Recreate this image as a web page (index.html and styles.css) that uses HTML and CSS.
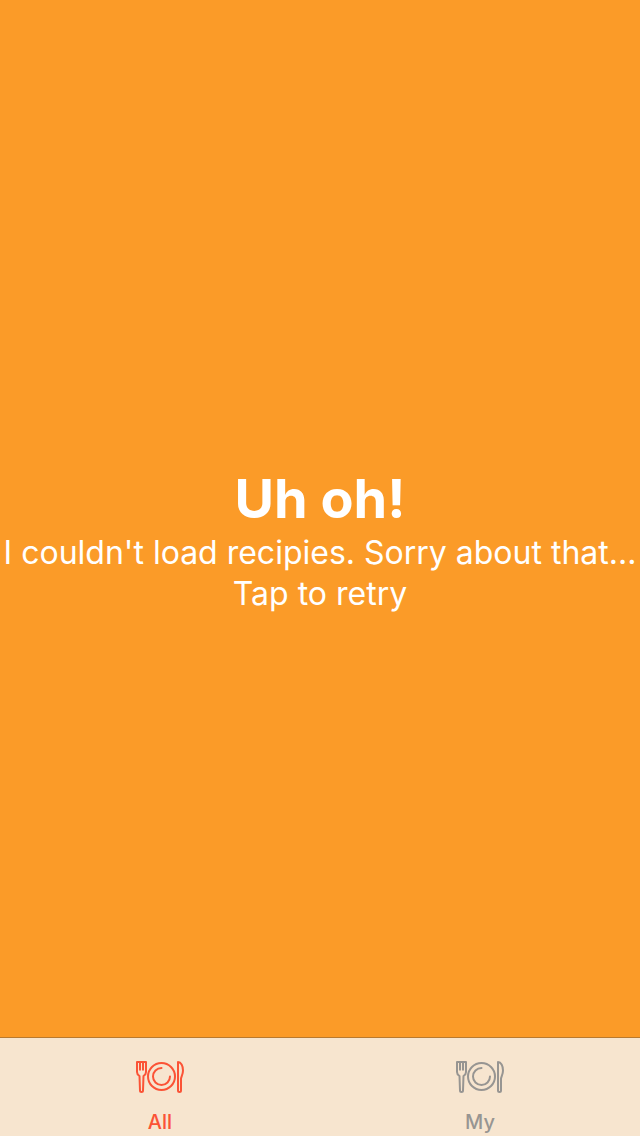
FILE: index.html
```html
<!DOCTYPE html>
<html lang="en">
<head>
<meta charset="utf-8">
<meta name="viewport" content="width=device-width, initial-scale=1">
<title>Recipes</title>
<link rel="stylesheet" href="styles.css">
</head>
<body>
<svg class="sprite" aria-hidden="true">
  <symbol id="dining" viewBox="0 0 48 32">
    <g fill="none" stroke="currentColor" stroke-width="2" stroke-linejoin="round" stroke-linecap="round">
      <path d="M1 1h9v10c0 2-.8 3-2.500 4L7 29.500c0 2-3 2-3 0L3.500 15C1.800 14 1 13 1 11Z"/>
      <path stroke-linecap="butt" d="M4 1v8.500M7 1v8.500"/>
      <circle cx="25.500" cy="15.500" r="13.500"/>
      <path d="M25.500 7A8.500 8.500 0 1 0 34 15.500"/>
      <path d="M42 1v28.500c0 2 3 2 3 0V18c0-2.500 2-4.500 2-8.500C47 5 45 1 42 1Z"/>
    </g>
  </symbol>
</svg>
<main class="content">
  <button class="error" type="button">
    <strong class="error-title">Uh oh!</strong>
    <span class="error-text">I couldn't load recipies. Sorry about that...</span>
    <span class="error-text">Tap to retry</span>
  </button>
</main>
<nav class="tabs" aria-label="Recipes">
  <a class="tab tab-active" href="#all" aria-current="page"><svg class="tab-icon" aria-hidden="true"><use href="#dining"/></svg><span>All</span></a>
  <a class="tab" href="#my"><svg class="tab-icon" aria-hidden="true"><use href="#dining"/></svg><span>My</span></a>
</nav>
</body>
</html>
```
FILE: styles.css
```css
* { box-sizing: border-box; }
body {
  margin: 0;
  min-height: 100vh;
  display: flex;
  flex-direction: column;
  background: #fb9b28;
  font-family: Inter, "Liberation Sans", sans-serif;
}
.sprite { position: absolute; width: 0; height: 0; }
.content {
  flex: 1;
  display: flex;
  padding-top: 42px;
}
.error {
  flex: 1;
  min-width: 0;
  display: flex;
  flex-direction: column;
  align-items: center;
  justify-content: center;
  padding: 0;
  border: 0;
  background: none;
  color: #fff;
  font: inherit;
  text-align: center;
  cursor: pointer;
}
.error-title { font-size: 54px; line-height: 66px; font-weight: 700; }
.error-text { font-size: 32px; line-height: 41px; white-space: nowrap; }
.tabs {
  display: flex;
  border-top: 1px solid #b87a30;
  background: #f7e5cf;
}
.tab {
  flex: 1;
  display: flex;
  flex-direction: column;
  align-items: center;
  gap: 17px;
  padding-top: 23px;
  color: #979592;
  font-size: 20px;
  line-height: 24px;
  font-weight: 500;
  text-decoration: none;
  padding-bottom: 2px;
}
.tab-active { color: #fb5336; }
.tab-icon { width: 48px; height: 32px; }
```
